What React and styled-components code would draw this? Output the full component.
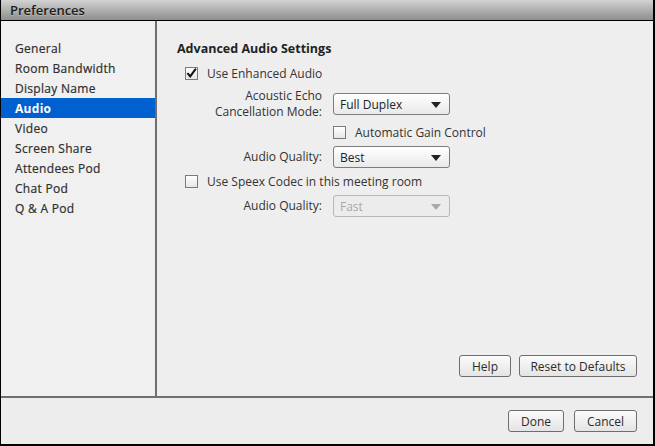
import React from "react";
import styled, { createGlobalStyle } from "styled-components";

const Global = createGlobalStyle`
  html, body { margin: 0; padding: 0; background: #eeeeee; }
  * { box-sizing: border-box; }
  body { font-family: "Open Sans", "Liberation Sans", sans-serif; }
`;

const Window = styled.div`
  width: 655px;
  height: 446px;
  display: flex;
  flex-direction: column;
  background: #eeeeee;
  border-left: 1px solid #000;
  border-right: 2px solid #000;
  border-bottom: 2px solid #000;
  color: #2b2b2b;
  font-size: 12px;
`;

const TitleBar = styled.div`
  height: 21px;
  flex: none;
  display: flex;
  align-items: center;
  padding-left: 9px;
  background: linear-gradient(#d2d2d2, #8e8e8e);
  border-bottom: 1px solid #000;
  font-size: 13px;
  font-weight: 600;
  color: #1c1c1c;
  text-shadow: 0 1px 0 rgba(255, 255, 255, 0.25);
`;

const Body = styled.div`
  flex: 1;
  display: flex;
  border-bottom: 2px solid #6f6f6f;
  min-height: 0;
`;

const Sidebar = styled.div`
  width: 156px;
  flex: none;
  background: #f0f0f0;
  border-right: 2px solid #6f6f6f;
  padding-top: 17px;
  display: flex;
  flex-direction: column;
`;

const NavItem = styled.div`
  height: 20px;
  display: flex;
  align-items: center;
  padding-left: 14px;
  font-weight: ${(p) => (p.$active ? 700 : 500)};
  color: ${(p) => (p.$active ? "#ffffff" : "#2e2e2e")};
  background: ${(p) => (p.$active ? "#0060d0" : "transparent")};
  letter-spacing: 0.3px;
  -webkit-text-stroke: ${(p) => (p.$active ? "0" : "0.2px #2e2e2e")};
`;

const Main = styled.div`
  flex: 1;
  display: flex;
  flex-direction: column;
  padding: 19px 16px 19px 20px;
`;

const Heading = styled.div`
  height: 16px;
  display: flex;
  align-items: center;
  font-size: 12.5px;
  font-weight: 700;
  color: #222;
`;

const Row = styled.div`
  display: flex;
  align-items: center;
  height: ${(p) => p.$h}px;
  margin-top: ${(p) => p.$mt}px;
  padding-left: ${(p) => p.$indent || 0}px;
`;

const Label = styled.div`
  width: 145px;
  margin-right: 11px;
  text-align: right;
  line-height: 16px;
  color: #333;
`;

const CheckLabel = styled.label`
  display: flex;
  align-items: center;
  gap: 9px;
  color: #333;
`;

const Box = styled.span`
  width: 13px;
  height: 13px;
  flex: none;
  border: 1px solid #7a7a7a;
  background: linear-gradient(#ffffff, #e6e6e6);
  display: flex;
  align-items: center;
  justify-content: center;
`;

const Select = styled.div`
  width: 117px;
  height: 22px;
  border: 1px solid ${(p) => (p.$disabled ? "#b8b8b8" : "#7d7d7d")};
  border-radius: 3px;
  background: ${(p) =>
    p.$disabled ? "#ececec" : "linear-gradient(#ffffff, #e9e9e9)"};
  display: flex;
  align-items: center;
  justify-content: space-between;
  padding: 0 8px 0 6px;
  color: ${(p) => (p.$disabled ? "#a8a8a8" : "#222")};
`;

const Arrow = styled.span`
  width: 0;
  height: 0;
  border-left: 5px solid transparent;
  border-right: 5px solid transparent;
  border-top: 6px solid ${(p) => (p.$disabled ? "#aaaaaa" : "#222")};
  margin-top: 1px;
`;

const ButtonBar = styled.div`
  margin-top: auto;
  display: flex;
  justify-content: flex-end;
  gap: ${(p) => p.$gap}px;
`;

const Button = styled.button`
  height: 22px;
  width: ${(p) => p.$w}px;
  flex: none;
  padding: 0;
  border: 1px solid #6e6e6e;
  border-radius: 3px;
  background: linear-gradient(#fbfbfb, #e4e4e4);
  font-family: inherit;
  font-size: 12px;
  color: #2b2b2b;
`;

const Footer = styled.div`
  height: 46px;
  flex: none;
  display: flex;
  justify-content: flex-end;
  align-items: flex-start;
  padding: 12px 16px 0 0;
  gap: 10px;
  background: #ededed;
`;

const Check = () => (
  <svg width="12" height="12" viewBox="0 0 12 12">
    <path d="M1.5 6.2 L4.6 9.6 L10.8 1.2" fill="none" stroke="#111" strokeWidth="2.2" />
  </svg>
);

const nav = [
  "General",
  "Room Bandwidth",
  "Display Name",
  "Audio",
  "Video",
  "Screen Share",
  "Attendees Pod",
  "Chat Pod",
  "Q & A Pod",
];

export default function App() {
  return (
    <>
      <Global />
      <Window>
        <TitleBar>Preferences</TitleBar>
        <Body>
          <Sidebar>
            {nav.map((n) => (
              <NavItem key={n} $active={n === "Audio"}>
                {n}
              </NavItem>
            ))}
          </Sidebar>
          <Main>
            <Heading>Advanced Audio Settings</Heading>
            <Row $h={18} $mt={8} $indent={8}>
              <CheckLabel>
                <Box>
                  <Check />
                </Box>
                Use Enhanced Audio
              </CheckLabel>
            </Row>
            <Row $h={32} $mt={6}>
              <Label>
                Acoustic Echo
                <br />
                Cancellation Mode:
              </Label>
              <Select>
                Full Duplex
                <Arrow />
              </Select>
            </Row>
            <Row $h={18} $mt={3} $indent={156}>
              <CheckLabel>
                <Box />
                Automatic Gain Control
              </CheckLabel>
            </Row>
            <Row $h={22} $mt={5}>
              <Label>Audio Quality:</Label>
              <Select>
                Best
                <Arrow />
              </Select>
            </Row>
            <Row $h={18} $mt={4} $indent={8}>
              <CheckLabel>
                <Box />
                Use Speex Codec in this meeting room
              </CheckLabel>
            </Row>
            <Row $h={22} $mt={5}>
              <Label>Audio Quality:</Label>
              <Select $disabled>
                Fast
                <Arrow $disabled />
              </Select>
            </Row>
            <ButtonBar $gap={8}>
              <Button $w={52}>Help</Button>
              <Button $w={118}>Reset to Defaults</Button>
            </ButtonBar>
          </Main>
        </Body>
        <Footer>
          <Button $w={56}>Done</Button>
          <Button $w={63}>Cancel</Button>
        </Footer>
      </Window>
    </>
  );
}
